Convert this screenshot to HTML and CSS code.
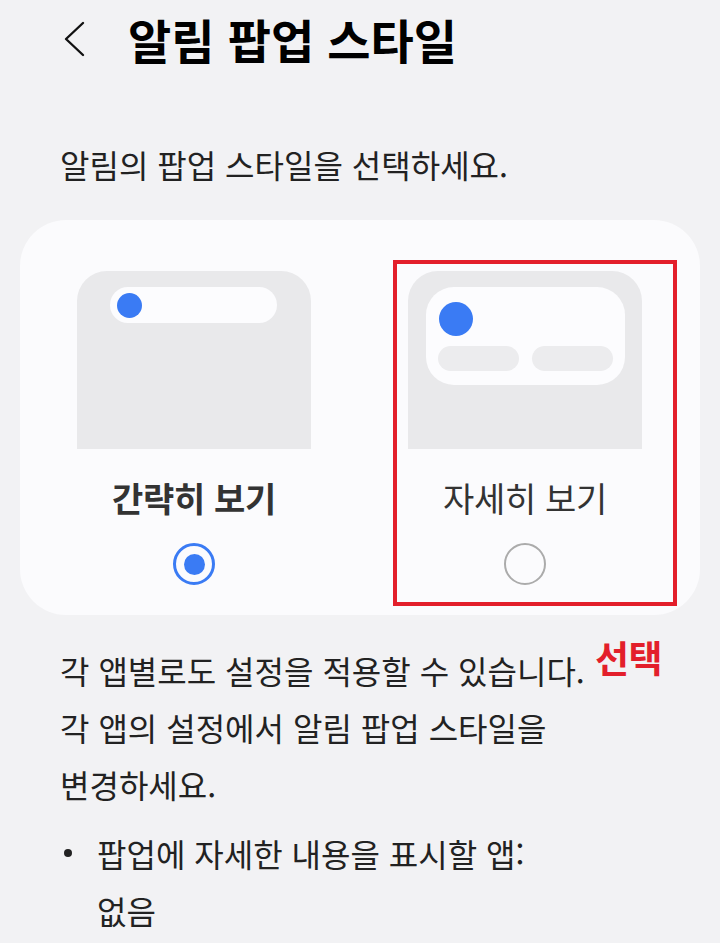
FILE: index.html
```html
<!DOCTYPE html>
<html lang="ko">
<head>
<meta charset="utf-8">
<title>알림 팝업 스타일</title>
<link rel="stylesheet" href="styles.css">
</head>
<body>
<header class="app-bar">
  <button class="back" aria-label="뒤로">
    <svg width="24" height="36" viewBox="0 0 24 36"><polyline points="21,2 4,18 21,34" fill="none" stroke="#111" stroke-width="2.4" stroke-linecap="round" stroke-linejoin="round"/></svg>
  </button>
  <h1 class="title">알림 팝업 스타일</h1>
</header>

<p class="intro">알림의 팝업 스타일을 선택하세요.</p>

<section class="card">
  <div class="option">
    <div class="preview">
      <div class="pill"><span class="dot"></span></div>
    </div>
    <div class="label label-on">간략히 보기</div>
    <span class="radio radio-on"><span class="radio-dot"></span></span>
  </div>
  <div class="option option-marked">
    <div class="preview">
      <div class="panel">
        <span class="dot dot-lg"></span>
        <div class="buttons"><span class="btn"></span><span class="btn"></span></div>
      </div>
    </div>
    <div class="label">자세히 보기</div>
    <span class="radio"></span>
    <span class="mark-box"></span>
  </div>
</section>

<div class="note-wrap">
  <p class="note">각 앱별로도 설정을 적용할 수 있습니다.<br>각 앱의 설정에서 알림 팝업 스타일을<br>변경하세요.</p>
  <span class="mark-text">선택</span>
</div>

<ul class="list">
  <li>팝업에 자세한 내용을 표시할 앱:<br>없음</li>
</ul>
</body>
</html>
```

FILE: styles.css
```css
html, body {
  margin: 0;
  background: #f2f2f4;
  font-family: "Noto Sans CJK KR", "Noto Sans", sans-serif;
  color: #1c1c1c;
  overflow: hidden;
}

.app-bar {
  display: flex;
  align-items: center;
  height: 76px;
  padding-left: 62px;
}

.back {
  border: 0;
  background: none;
  padding: 0;
  width: 24px;
  height: 36px;
  margin-top: 2px;
  display: flex;
}

.title {
  margin: 0 0 0 42px;
  font-size: 47px;
  font-weight: 700;
  color: #000;
  line-height: 1;
}

.intro {
  margin: 72px 0 0 60px;
  font-size: 32px;
  line-height: 1;
  color: #222;
}

.card {
  position: relative;
  margin: 40px 20px 0;
  height: 395px;
  box-sizing: border-box;
  background: #fbfbfd;
  border-radius: 46px;
  padding: 51px 58px 0 57px;
  display: grid;
  grid-template-columns: 234px 234px;
  column-gap: 97px;
}

.option {
  position: relative;
  display: flex;
  flex-direction: column;
  align-items: center;
}

.preview {
  width: 234px;
  height: 178px;
  background: #e9e9eb;
  border-radius: 30px 30px 0 0;
  box-sizing: border-box;
  padding: 16px 18px 0 18px;
}

.pill {
  width: 167px;
  height: 36px;
  margin-left: 15px;
  background: #fcfcfe;
  border-radius: 18px;
  display: flex;
  align-items: center;
  padding-left: 7px;
  box-sizing: border-box;
}

.dot {
  width: 25px;
  height: 25px;
  border-radius: 50%;
  background: #3a7bf4;
  flex: none;
}

.panel {
  width: 199px;
  height: 98px;
  background: #fcfcfe;
  border-radius: 28px;
  box-sizing: border-box;
  padding: 15px 12px 0 12px;
}

.dot-lg {
  display: block;
  width: 34px;
  height: 34px;
  margin-left: 1px;
}

.buttons {
  display: flex;
  gap: 13px;
  margin-top: 10px;
}

.btn {
  width: 81px;
  height: 25px;
  border-radius: 13px;
  background: #ececee;
}

.label {
  margin-top: 29px;
  font-size: 34px;
  line-height: 40px;
  letter-spacing: -0.3px;
  color: #333;
}

.label-on {
  font-weight: 700;
}

.radio {
  margin-top: 25px;
  width: 42px;
  height: 42px;
  box-sizing: border-box;
  border-radius: 50%;
  border: 2.5px solid #ababab;
  display: flex;
  align-items: center;
  justify-content: center;
}

.radio-on {
  border: 3.5px solid #3a7bf4;
}

.radio-dot {
  width: 21px;
  height: 21px;
  border-radius: 50%;
  background: #3a7bf4;
}

/* red annotation frame around the second option */
.mark-box {
  position: absolute;
  left: -15px;
  top: -11px;
  width: 284px;
  height: 346px;
  box-sizing: border-box;
  border: 4px solid #e31f2b;
}

.note-wrap {
  position: relative;
  margin: 27px 0 0 60px;
}

.note {
  margin: 0;
  font-size: 32px;
  line-height: 57px;
  color: #222;
}

.mark-text {
  position: absolute;
  left: 535px;
  top: -3px;
  font-size: 37px;
  font-weight: 700;
  color: #e31f2b;
  letter-spacing: -0.5px;
  line-height: 1;
}

.list {
  list-style: none;
  margin: 12px 0 0 0;
  padding: 0 0 0 97px;
}

.list li {
  position: relative;
  font-size: 32px;
  line-height: 57px;
  color: #222;
}

.list li::before {
  content: "";
  position: absolute;
  left: -33px;
  top: 24px;
  width: 8px;
  height: 8px;
  border-radius: 50%;
  background: #222;
}
```
